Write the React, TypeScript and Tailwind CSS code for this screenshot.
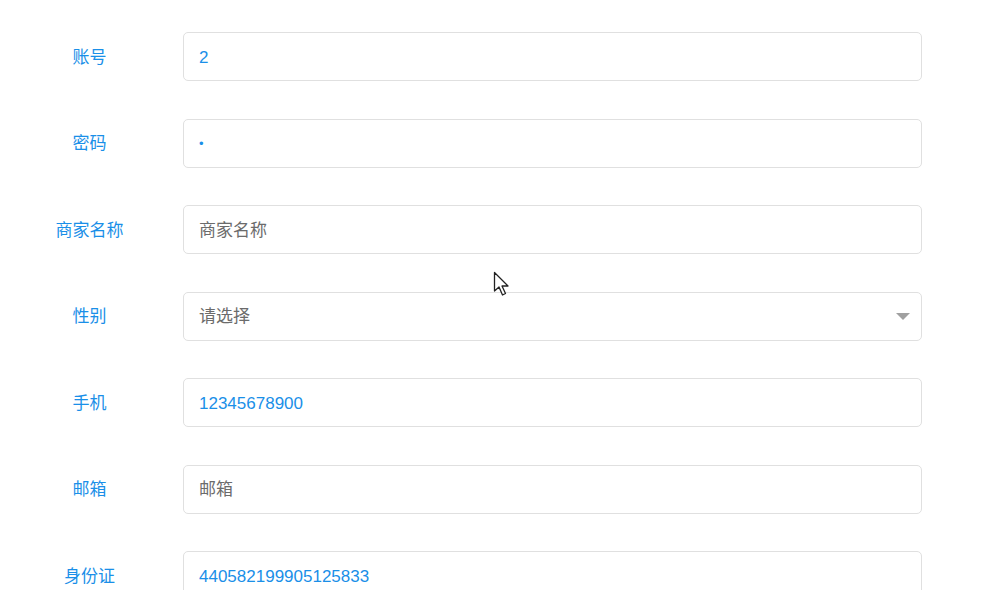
import React from "react";

const font = { fontFamily: '"Liberation Sans", "Noto Sans CJK SC", sans-serif' };

type Row = { label: string; value?: string; placeholder?: string; select?: boolean };

const rows: Row[] = [
  { label: "账号", value: "2" },
  { label: "密码", value: "•" },
  { label: "商家名称", placeholder: "商家名称" },
  { label: "性别", placeholder: "请选择", select: true },
  { label: "手机", value: "12345678900" },
  { label: "邮箱", placeholder: "邮箱" },
  { label: "身份证", value: "440582199905125833" },
];

export default function App() {
  return (
    <div className="relative w-[1001px] h-[590px] overflow-hidden bg-white" style={font}>
      <div className="flex flex-col gap-[37.5px] pt-[32px]">
        {rows.map((r) => (
          <div key={r.label} className="flex items-center">
            <div className="w-[179px] text-center text-[17px] text-[#1a8fe8] pt-[2px]">{r.label}</div>
            <div className="ml-[4px] w-[739px] h-[49px] border border-[#e0e0e0] rounded-[5px] flex items-center px-[15px] pt-[2px] text-[17px]">
              {r.value ? (
                <span className={r.value === "•" ? "text-[#1a8fe8] text-[13px]" : "text-[#1a8fe8]"}>{r.value}</span>
              ) : (
                <span className="text-[#6b6b6b]">{r.placeholder}</span>
              )}
              {r.select && (
                <svg className="ml-auto mr-[-4px]" width="14" height="8" viewBox="0 0 14 8">
                  <polygon points="0,0 14,0 7,7" fill="#a0a0a0" />
                </svg>
              )}
            </div>
          </div>
        ))}
      </div>
      <svg className="absolute left-[493px] top-[271px]" width="18" height="27" viewBox="0 0 18 27">
        <path d="M1.5 1.5 L1.5 20 L6 16 L9.5 24 L12.5 22.5 L9 15 L15 15 Z" fill="white" stroke="#222" strokeWidth="1.3" strokeLinejoin="round" />
      </svg>
    </div>
  );
}
